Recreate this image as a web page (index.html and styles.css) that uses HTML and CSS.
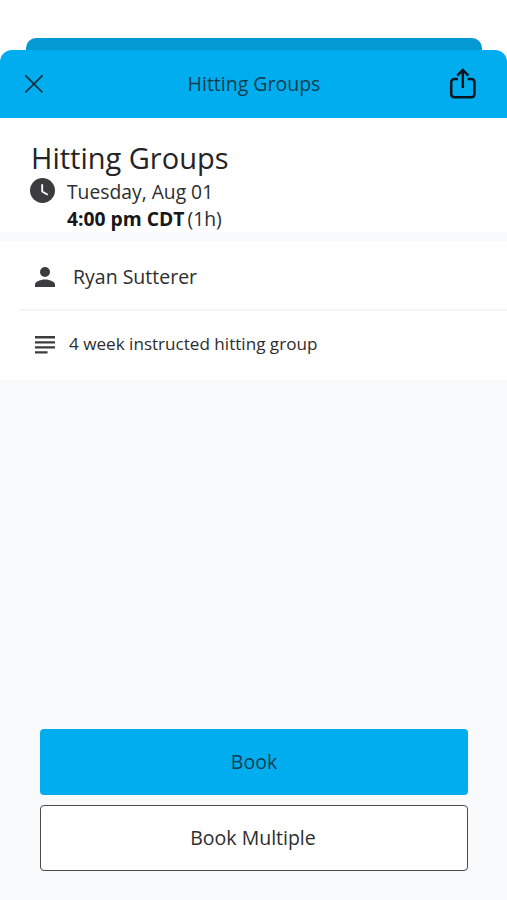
FILE: index.html
```html
<!DOCTYPE html>
<html lang="en">
<head>
<meta charset="utf-8">
<title>Hitting Groups</title>
<link rel="stylesheet" href="styles.css">
</head>
<body>
<div class="back-sheet"></div>
<main class="sheet">
  <header class="bar">
    <svg class="close" viewBox="0 0 20 20"><path d="M1.3 1.3 18.5 18.5M18.5 1.3 1.3 18.5"/></svg>
    <h1 class="bar-title">Hitting Groups</h1>
    <svg class="share" viewBox="0 0 28 32"><path d="M9 11H5.5Q2.2 11 2.2 14.3V25.9Q2.2 29.2 5.5 29.2H22.1Q25.4 29.2 25.4 25.9V14.3Q25.4 11 22.1 11H18.6M13.8 20V2.7M8.2 7.600 13.800 2 19.400 7.600"/></svg>
  </header>
  <section class="summary">
    <h2 class="title">Hitting Groups</h2>
    <div class="when">
      <svg class="clock" viewBox="0 0 24 24"><circle cx="12" cy="12" r="12"/><path d="M11.700 6v7l5.300 3.100"/></svg>
      <div class="lines">
        <p class="line"><span class="date">Tuesday, Aug 01</span></p>
        <p class="line"><strong class="time">4:00 pm CDT</strong><span class="duration">(1h)</span></p>
      </div>
    </div>
  </section>
  <section class="details">
    <div class="row person">
      <svg class="icon" viewBox="0 0 20 20"><circle cx="10" cy="5" r="5"/><path d="M0 20v-2.500c0-3.300 6.600-5 10-5s10 1.700 10 5V20z"/></svg>
      <span class="name">Ryan Sutterer</span>
    </div>
    <div class="row note">
      <svg class="icon" viewBox="0 0 20 20"><path d="M0 1h20v2.400H0zM0 6.200h20v2.400H0zM0 11.200h20v2.400H0zM0 16.200h12.500v2.400H0z"/></svg>
      <span class="text">4 week instructed hitting group</span>
    </div>
  </section>
  <footer class="actions">
    <button class="button primary"><span>Book</span></button>
    <button class="button outline"><span>Book Multiple</span></button>
  </footer>
</main>
</body>
</html>
```
FILE: styles.css
```css
* { box-sizing: border-box; }
body {
  margin: 0;
  height: 900px;
  display: flex;
  flex-direction: column;
  background: #fff;
  color: #2d2d2f;
  font-family: "Open Sans", "Noto Sans", sans-serif;
  white-space: nowrap;
}
h1, h2, p { margin: 0; font-weight: 400; }
svg { display: block; flex: none; }
.back-sheet {
  height: 12px;
  margin: 38px 25px 0 26px;
  border-radius: 10px 10px 0 0;
  background: #0499d3;
}
.sheet {
  flex: 1;
  display: flex;
  flex-direction: column;
  background: linear-gradient(#fff 0 60px, #f8fafc 60px);
}
.bar {
  height: 68px;
  padding: 0 30px 0 24px;
  display: grid;
  grid-template-columns: 28px 1fr 28px;
  align-items: center;
  border-radius: 12px 12px 0 0;
  background: #00aeef;
}
.close { width: 20px; height: 20px; fill: none; stroke: #092c3b; stroke-width: 1.7; }
.bar-title {
  padding: 0 0 1px 7px;
  font-size: 19.5px;
  line-height: 27px;
  text-align: center;
  color: #113c4e;
}
.share { width: 28px; height: 32px; fill: none; stroke: #06151c; stroke-width: 2.5; }
.summary { height: 114px; padding: 22px 30px 0; background: #fff; }
.title { padding-left: 1px; font-size: 29px; line-height: 36px; color: #242426; }
.when { display: flex; gap: 12px; margin-top: 2px; }
.clock { width: 25px; height: 25px; fill: #3c3c3e; }
.clock path { fill: none; stroke: #fff; stroke-width: 1.8; }
.line { height: 27px; line-height: 27px; font-size: 19.3px; display: flex; gap: 3px; }
.time { font-weight: 700; color: #171719; }
.details { margin-top: 9.5px; height: 138.5px; background: #fff; }
.row { display: flex; align-items: center; height: 69px; margin-left: 20px; padding-left: 15px; }
.person { border-bottom: 2px solid #f3f4f5; gap: 18px; padding-top: 3px; }
.note { gap: 14px; }
.icon { width: 20px; height: 20px; fill: #3c3c3e; }
.name { padding-bottom: 1px; font-size: 19.5px; }
.text { padding-bottom: 4px; font-size: 17.1px; }
.actions { margin: auto 39px 29px 40px; display: flex; flex-direction: column; gap: 10px; }
.button {
  height: 66px;
  padding: 0 0 2px;
  border: 0;
  border-radius: 4px;
  font: 19.5px/27px "Open Sans", "Noto Sans", sans-serif;
  color: #2d2d2f;
}
.primary { background: #00aeef; color: #113c4e; }
.outline { padding-right: 2px; background: #fff; border: 1.5px solid #4a4a4c; }
```
